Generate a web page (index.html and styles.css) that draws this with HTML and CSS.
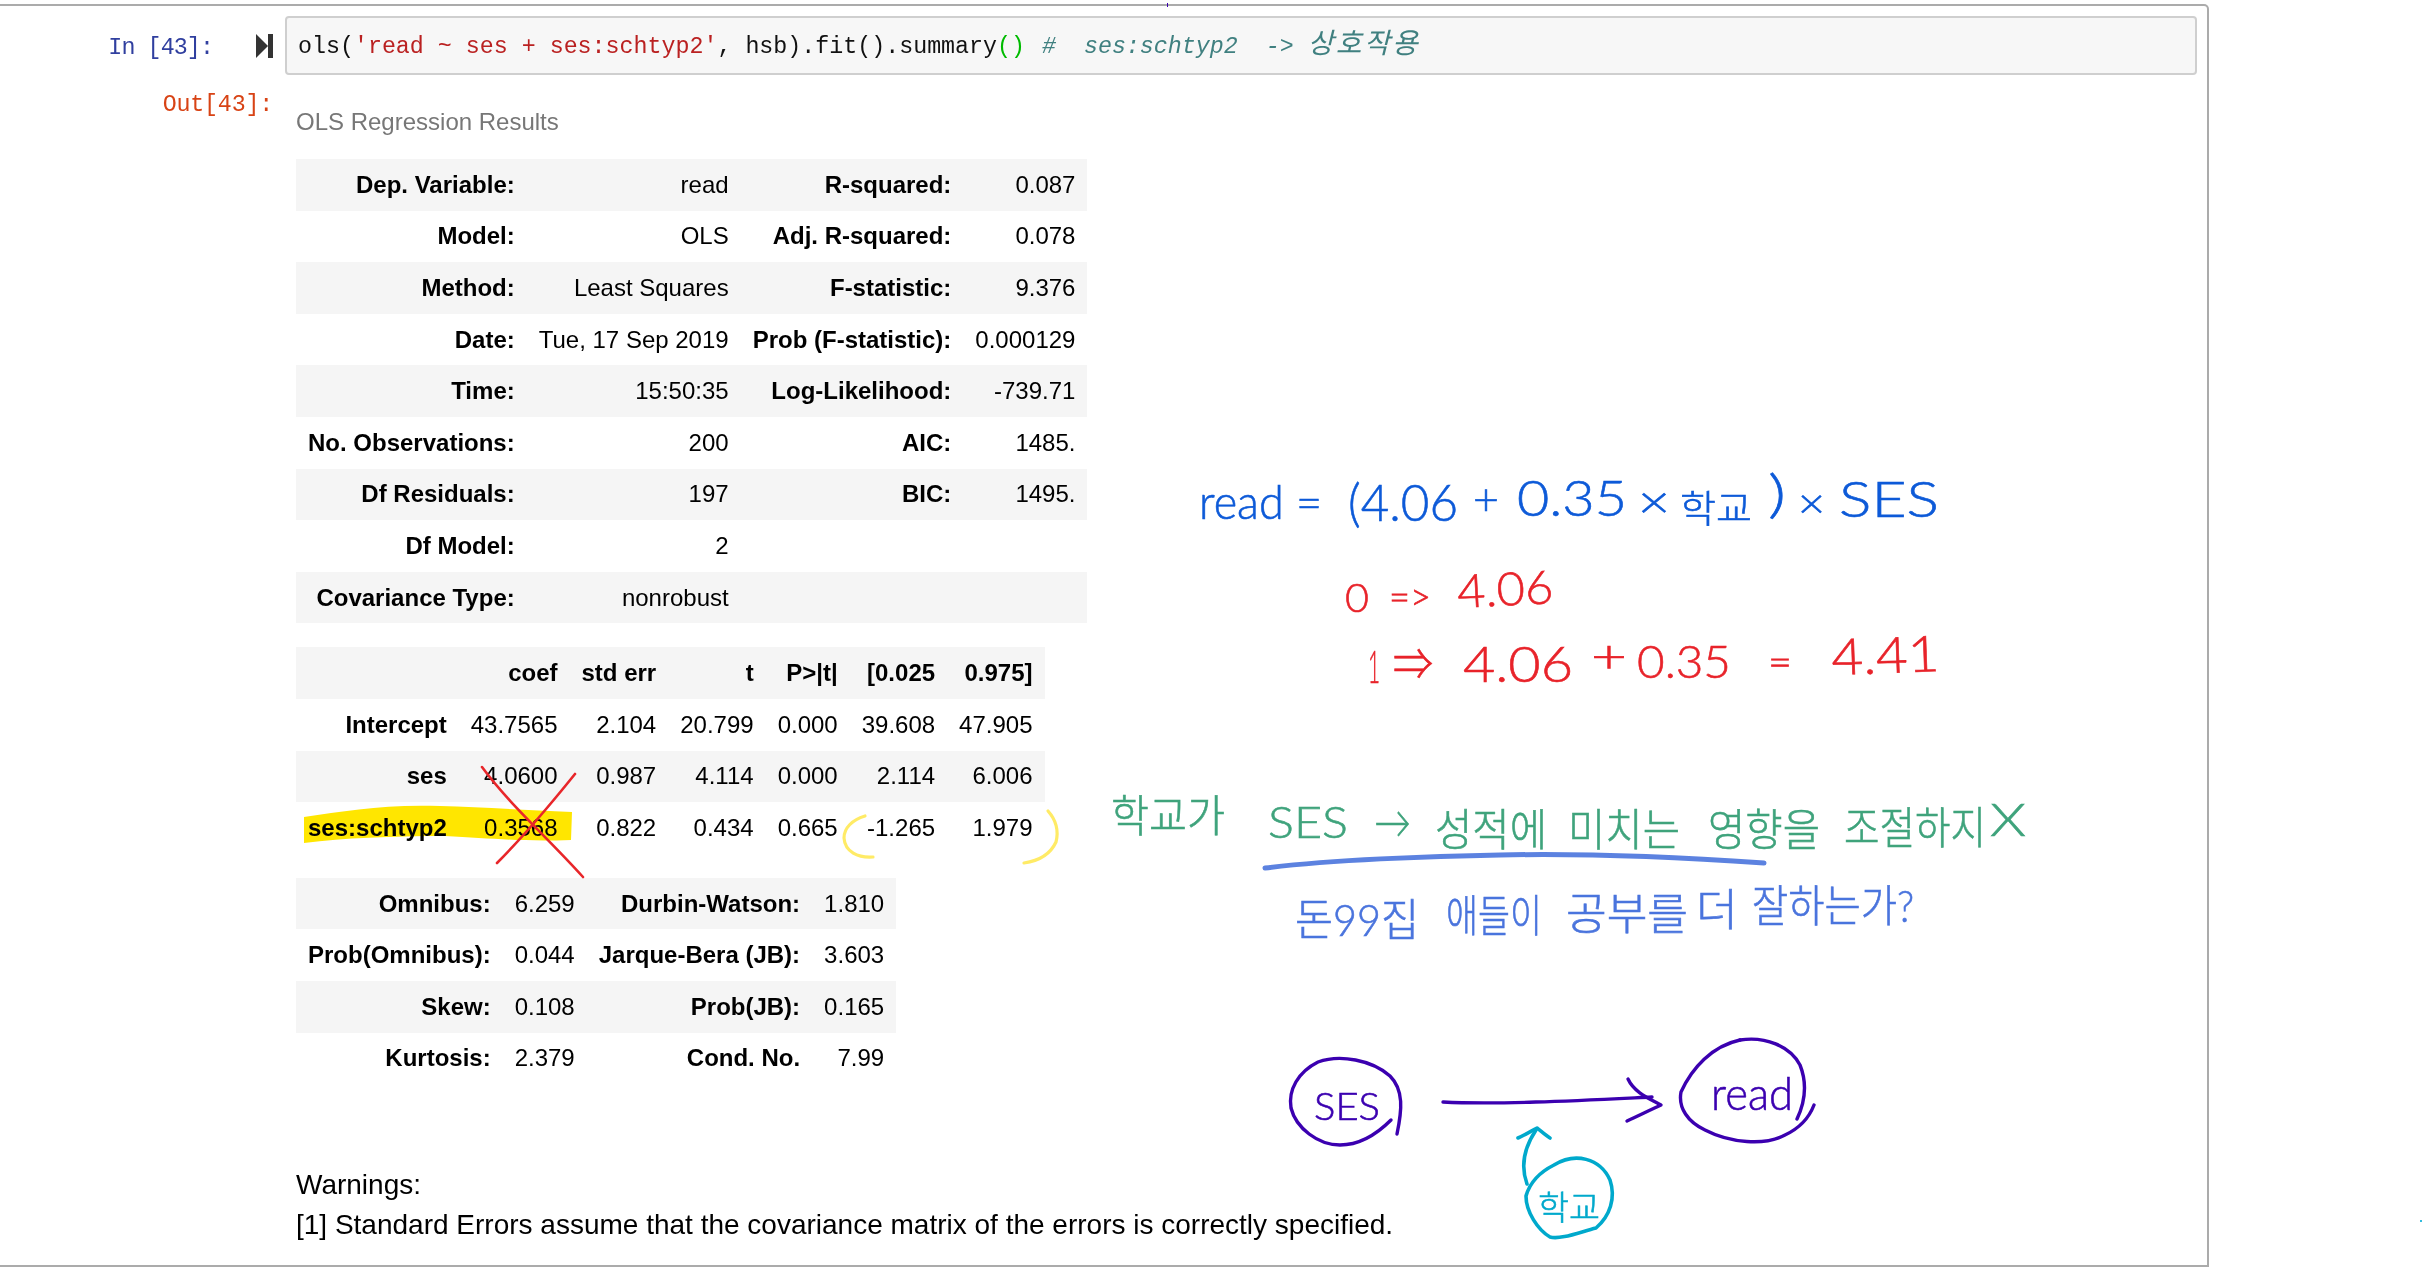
FILE: index.html
```html
<!DOCTYPE html>
<html lang="ko">
<head>
<meta charset="utf-8">
<title>OLS Regression Results</title>
<link rel="stylesheet" href="styles.css">
</head>
<body>
<main class="notebook">
  <section class="input-row">
    <div class="gutter">
      <span class="prompt-in">In [43]:</span>
      <svg class="run-icon" viewBox="0 0 17 24" aria-hidden="true"><path d="M0 0 L12 12 L0 24 Z"/><rect x="12" y="0" width="5" height="24"/></svg>
    </div>
    <div class="code-box"><span>ols(</span><span class="str">'read ~ ses + ses:schtyp2'</span><span>, hsb).fit().summary</span><span class="match">()</span> <span class="cmt">#  ses:schtyp2  -&gt; <span class="cmt-ko">상호작용</span></span></div>
  </section>
  <section class="output-row">
    <div class="gutter-out"><span class="prompt-out">Out[43]:</span></div>
    <div class="output">
      <table class="stats">
        <caption>OLS Regression Results</caption>
        <tr><th>Dep. Variable:</th><td>read</td><th>R-squared:</th><td>0.087</td></tr>
        <tr><th>Model:</th><td>OLS</td><th>Adj. R-squared:</th><td>0.078</td></tr>
        <tr><th>Method:</th><td>Least Squares</td><th>F-statistic:</th><td>9.376</td></tr>
        <tr><th>Date:</th><td>Tue, 17 Sep 2019</td><th>Prob (F-statistic):</th><td>0.000129</td></tr>
        <tr><th>Time:</th><td>15:50:35</td><th>Log-Likelihood:</th><td>-739.71</td></tr>
        <tr><th>No. Observations:</th><td>200</td><th>AIC:</th><td>1485.</td></tr>
        <tr><th>Df Residuals:</th><td>197</td><th>BIC:</th><td>1495.</td></tr>
        <tr><th>Df Model:</th><td>2</td><th></th><td></td></tr>
        <tr><th>Covariance Type:</th><td>nonrobust</td><th></th><td></td></tr>
      </table>
      <table class="stats coefs">
        <tr><th></th><th>coef</th><th>std err</th><th>t</th><th>P&gt;|t|</th><th>[0.025</th><th>0.975]</th></tr>
        <tr><th>Intercept</th><td>43.7565</td><td>2.104</td><td>20.799</td><td>0.000</td><td>39.608</td><td>47.905</td></tr>
        <tr><th>ses</th><td>4.0600</td><td>0.987</td><td>4.114</td><td>0.000</td><td>2.114</td><td>6.006</td></tr>
        <tr><th>ses:schtyp2</th><td>0.3568</td><td>0.822</td><td>0.434</td><td>0.665</td><td>-1.265</td><td>1.979</td></tr>
      </table>
      <table class="stats diag">
        <tr><th>Omnibus:</th><td>6.259</td><th>Durbin-Watson:</th><td>1.810</td></tr>
        <tr><th>Prob(Omnibus):</th><td>0.044</td><th>Jarque-Bera (JB):</th><td>3.603</td></tr>
        <tr><th>Skew:</th><td>0.108</td><th>Prob(JB):</th><td>0.165</td></tr>
        <tr><th>Kurtosis:</th><td>2.379</td><th>Cond. No.</th><td>7.99</td></tr>
      </table>
      <p class="warnings">Warnings:<br>[1] Standard Errors assume that the covariance matrix of the errors is correctly specified.</p>
    </div>
  </section>
</main>

<svg class="ink" viewBox="0 0 2422 1274" aria-hidden="false">
  <!-- highlighter and table marks -->
  <path class="marker" d="M304 817 C345 811 385 804 440 806 C480 807 520 810 572 812 L571 840 C520 842 490 838 445 836 C390 836 345 838 304 843 Z"/>
  <path class="stroke red thin" d="M482 767 C510 805 545 835 583 877"/>
  <path class="stroke red thin" d="M575 774 C550 805 525 835 497 863"/>
  <path class="stroke pale" d="M865 816 C852 820 844 828 844 838 C845 852 858 858 873 857"/>
  <path class="stroke pale" d="M1048 811 C1056 820 1059 830 1056 842 C1050 855 1038 861 1024 863"/>
  <rect class="speck-violet" x="1167" y="3" width="1" height="4"/>
  <rect class="speck-teal" x="2420" y="1220" width="2" height="2"/>

  <!-- blue formula -->
  <g class="hand blue">
    <text x="1199" y="519" font-size="48" textLength="123" lengthAdjust="spacingAndGlyphs">read =</text>
    <text x="1348" y="521" font-size="52" textLength="110" lengthAdjust="spacingAndGlyphs">(4.06</text>
    <text x="1473" y="515" font-size="44" textLength="26" lengthAdjust="spacingAndGlyphs">+</text>
    <text x="1517" y="516" font-size="50" textLength="110" lengthAdjust="spacingAndGlyphs">0.35</text>
    <text x="1638" y="518" font-size="46" textLength="32" lengthAdjust="spacingAndGlyphs">×</text>
    <text x="1680" y="522" font-size="38" textLength="72" lengthAdjust="spacingAndGlyphs">학교</text>
    <text x="1768" y="512" font-size="52" textLength="18" lengthAdjust="spacingAndGlyphs">)</text>
    <text x="1798" y="518" font-size="42" textLength="27" lengthAdjust="spacingAndGlyphs">×</text>
    <text x="1839" y="517" font-size="50" textLength="100" lengthAdjust="spacingAndGlyphs">SES</text>
  </g>

  <!-- red cases -->
  <g class="hand red">
    <text x="1345" y="612" font-size="40" textLength="24" lengthAdjust="spacingAndGlyphs">0</text>
    <text x="1389" y="610" font-size="38" textLength="42" lengthAdjust="spacingAndGlyphs">=&gt;</text>
    <text x="1458" y="608" font-size="46" textLength="96" lengthAdjust="spacingAndGlyphs" transform="rotate(-3 1458 608)">4.06</text>
    <text x="1368" y="683" font-size="46" textLength="12" lengthAdjust="spacingAndGlyphs">1</text>
    <text x="1393" y="680" font-size="44" textLength="40" lengthAdjust="spacingAndGlyphs">⇒</text>
    <text x="1463" y="682" font-size="50" textLength="110" lengthAdjust="spacingAndGlyphs">4.06</text>
    <text x="1591" y="672" font-size="46" textLength="36" lengthAdjust="spacingAndGlyphs">+</text>
    <text x="1637" y="678" font-size="46" textLength="94" lengthAdjust="spacingAndGlyphs">0.35</text>
    <text x="1768" y="676" font-size="40" textLength="24" lengthAdjust="spacingAndGlyphs">=</text>
    <text x="1832" y="675" font-size="50" textLength="108" lengthAdjust="spacingAndGlyphs" transform="rotate(-2 1832 675)">4.41</text>
  </g>

  <!-- green sentence -->
  <g class="hand green">
    <text x="1111" y="832" font-size="44" textLength="114" lengthAdjust="spacingAndGlyphs">학교가</text>
    <text x="1268" y="838" font-size="44" textLength="80" lengthAdjust="spacingAndGlyphs">SES</text>
    <text x="1374" y="838" font-size="44" textLength="37" lengthAdjust="spacingAndGlyphs">→</text>
    <text x="1435" y="846" font-size="44" textLength="112" lengthAdjust="spacingAndGlyphs">성적에</text>
    <text x="1568" y="846" font-size="44" textLength="112" lengthAdjust="spacingAndGlyphs">미치는</text>
    <text x="1708" y="846" font-size="44" textLength="112" lengthAdjust="spacingAndGlyphs">영향을</text>
    <text x="1844" y="844" font-size="44" textLength="142" lengthAdjust="spacingAndGlyphs">조절하지</text>
    <text x="1990" y="836" font-size="46" textLength="36" lengthAdjust="spacingAndGlyphs">X</text>
  </g>
  <path class="stroke pencil" d="M1265 868 C1330 860 1430 856 1500 855 C1590 853 1690 858 1764 863"/>
  <g class="hand pencil-text">
    <text x="1295" y="936" font-size="44" textLength="124" lengthAdjust="spacingAndGlyphs">돈99집</text>
    <text x="1446" y="932" font-size="44" textLength="96" lengthAdjust="spacingAndGlyphs">애들이</text>
    <text x="1566" y="930" font-size="44" textLength="122" lengthAdjust="spacingAndGlyphs">공부를</text>
    <text x="1696" y="926" font-size="44" textLength="42" lengthAdjust="spacingAndGlyphs">더</text>
    <text x="1752" y="922" font-size="44" textLength="162" lengthAdjust="spacingAndGlyphs">잘하는가?</text>
  </g>

  <!-- diagram -->
  <path class="stroke violet" d="M1397 1134 C1402 1110 1404 1090 1390 1076 C1372 1060 1340 1054 1318 1062 C1298 1072 1288 1090 1291 1108 C1296 1128 1318 1145 1340 1145 C1360 1145 1378 1133 1391 1120"/>
  <path class="stroke violet" d="M1443 1102 C1500 1105 1590 1100 1652 1097"/>
  <path class="stroke violet" d="M1628 1079 C1634 1092 1648 1098 1661 1105 C1650 1110 1638 1116 1627 1121"/>
  <path class="stroke violet" d="M1740 1040 C1712 1046 1692 1068 1681 1092 C1678 1108 1688 1122 1705 1130 C1730 1143 1765 1146 1785 1135 C1800 1128 1809 1118 1814 1105"/>
  <path class="stroke violet" d="M1740 1040 C1765 1036 1790 1046 1800 1065 C1808 1085 1805 1102 1797 1119"/>
  <g class="hand violet-text">
    <text x="1314" y="1120" font-size="38" textLength="66" lengthAdjust="spacingAndGlyphs">SES</text>
    <text x="1711" y="1110" font-size="46" textLength="82" lengthAdjust="spacingAndGlyphs">read</text>
  </g>
  <path class="stroke teal" d="M1527 1184 C1520 1165 1524 1148 1536 1130"/>
  <path class="stroke teal" d="M1518 1138 C1525 1135 1531 1131 1537 1128 C1541 1131 1545 1135 1550 1138"/>
  <path class="stroke teal" d="M1554 1165 C1575 1152 1600 1158 1610 1180 C1616 1198 1610 1216 1596 1228 C1580 1232 1560 1240 1550 1237 C1538 1230 1526 1212 1526 1196 C1530 1182 1540 1172 1554 1165"/>
  <g class="hand teal-text">
    <text x="1538" y="1220" font-size="34" textLength="62" lengthAdjust="spacingAndGlyphs">학교</text>
  </g>
</svg>
</body>
</html>
```

FILE: styles.css
```css
html, body {
  margin: 0;
  padding: 0;
  background: #fff;
  height: 1274px;
  overflow: hidden;
}

body {
  position: relative;
  font-family: "Liberation Sans", Arial, sans-serif;
  color: #000;
}

.notebook {
  box-sizing: border-box;
  width: 2209px;
  height: 1263px;
  margin-top: 4px;
  border-top: 2px solid #ababab;
  border-right: 2px solid #ababab;
  border-bottom: 2px solid #ababab;
  border-top-right-radius: 5px;
  padding-top: 10px;
}

.input-row {
  display: flex;
  align-items: stretch;
}

.gutter {
  box-sizing: border-box;
  flex: 0 0 285px;
  display: flex;
  justify-content: flex-end;
  align-items: center;
  gap: 43px;
  padding-right: 12px;
}

.prompt-in,
.prompt-out,
.code-box {
  font-family: "Liberation Mono", "Noto Sans CJK KR", monospace;
  font-size: 23.3px;
  white-space: pre;
}

.prompt-in {
  color: #303f9f;
  letter-spacing: -0.9px;
  padding-top: 5px;
}

.prompt-out {
  color: #d84315;
  letter-spacing: -0.2px;
}

.run-icon {
  width: 17px;
  height: 24px;
  fill: #333;
}

.code-box {
  box-sizing: border-box;
  width: 1912px;
  height: 59px;
  line-height: 58px;
  padding-left: 11px;
  background: #f7f7f7;
  border: 2px solid #cfcfcf;
  border-radius: 4px;
  color: #111;
}

.str { color: #ba2121; }
.match { color: #0b0; }
.cmt { color: #408080; font-style: italic; margin-left: 3px; }
.cmt-ko { font-size: 28px; line-height: 1; letter-spacing: 2.4px; }

.output-row {
  display: flex;
  margin-top: 15px;
}

.gutter-out {
  flex: 0 0 273px;
  text-align: right;
  line-height: 30px;
}

.output {
  padding-left: 23px;
  flex: 1;
}

.stats {
  border-collapse: collapse;
  border: none;
  font-size: 24px;
  margin-bottom: 24px;
}

.stats caption {
  text-align: left;
  color: #777;
  font-size: 24px;
  line-height: 30px;
  padding: 17px 0 22px;
}

.stats tr {
  height: 51.6px;
}

.stats tr:nth-child(odd) {
  background: #f5f5f5;
}

.stats th,
.stats td {
  padding: 0 12px;
  text-align: right;
  vertical-align: middle;
  white-space: nowrap;
  font-weight: 400;
}

.stats th {
  font-weight: 700;
}

.coefs {
  margin-bottom: 24px;
}

.diag {
  margin-bottom: 0;
}

.warnings {
  margin: 81px 0 0;
  font-size: 28px;
  line-height: 40px;
}

/* Ink annotation layer lying over the notebook */
.ink {
  position: absolute;
  left: 0;
  top: 0;
  width: 2422px;
  height: 1274px;
  pointer-events: none;
}

.marker {
  fill: #ffe600;
  mix-blend-mode: multiply;
}

.speck-violet { fill: #3b00b0; }
.speck-teal { fill: #33bbdd; }

.stroke {
  fill: none;
  stroke-width: 3.4px;
  stroke-linecap: round;
  stroke-linejoin: round;
}

.stroke.red { stroke: #e8262a; }
.stroke.thin { stroke-width: 2.6px; }
.stroke.pale { stroke: #ffeb66; stroke-width: 3.2px; }
.stroke.pencil { stroke: #4a74dd; stroke-width: 5px; opacity: .9; }
.stroke.violet { stroke: #3b00b0; }
.stroke.teal { stroke: #00a9cc; stroke-width: 3.6px; }

.hand text {
  font-family: Lato, "Noto Sans CJK KR", sans-serif;
  font-weight: 300;
  stroke-width: 0.6px;
}

.hand.blue { fill: #0d5ad8; stroke: #0d5ad8; }
.hand.red { fill: #e8232a; stroke: #e8232a; }
.hand.green { fill: #3fa37c; stroke: #3fa37c; }
.hand.pencil-text { fill: #4a74dd; stroke: #4a74dd; }
.hand.violet-text { fill: #3b00b0; stroke: #3b00b0; }
.hand.teal-text { fill: #00a9cc; stroke: #00a9cc; }
```
